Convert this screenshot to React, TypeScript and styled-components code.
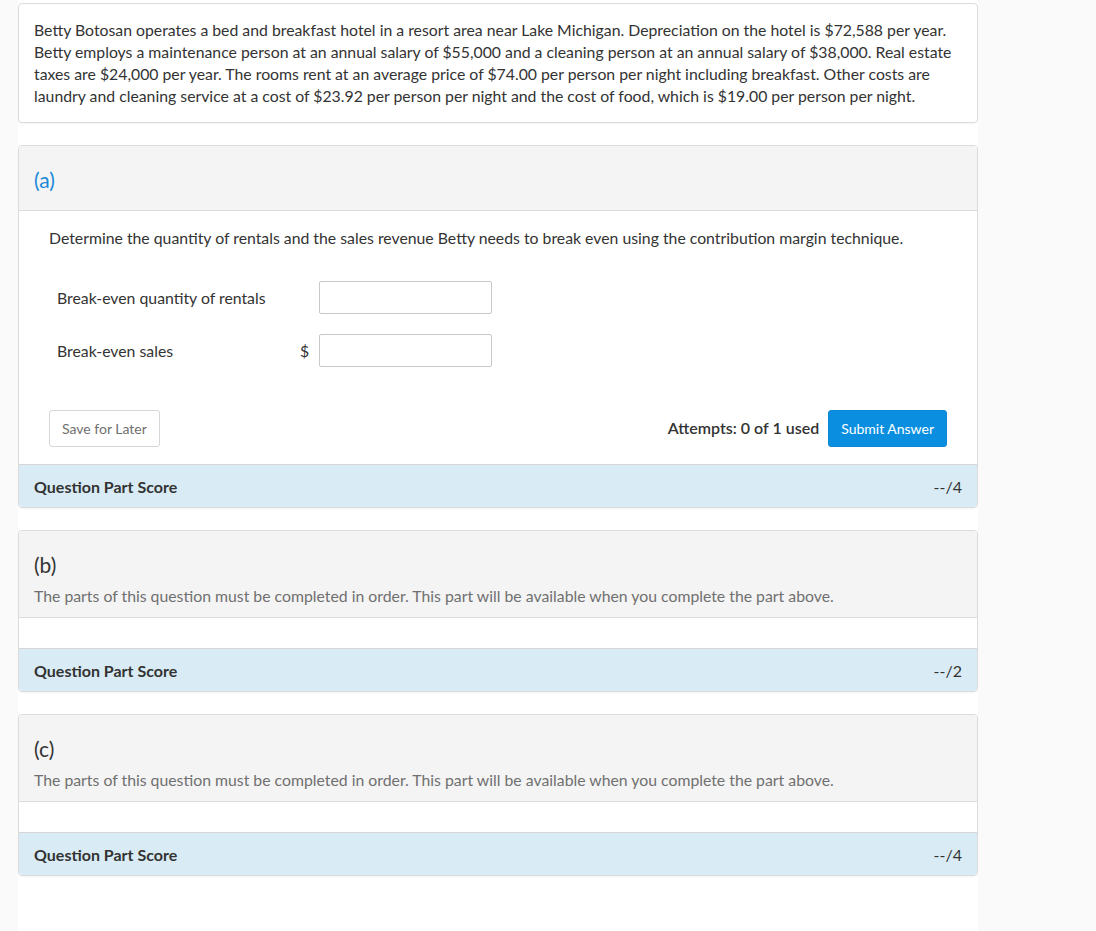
import React from "react";
import styled, { createGlobalStyle } from "styled-components";

const GlobalStyle = createGlobalStyle`
  body {
    margin: 0;
    background: #fafafa;
    font-family: Lato, "Open Sans", sans-serif;
    color: #333;
  }
`;

type Part = {
  letter: string;
  max: number;
  locked: boolean;
};

const parts: Part[] = [
  { letter: "a", max: 4, locked: false },
  { letter: "b", max: 2, locked: true },
  { letter: "c", max: 4, locked: true },
];

const App = (): JSX.Element => {
  return (
    <>
      <GlobalStyle />
      <Column>
        <Card>
          <Problem>
            Betty Botosan operates a bed and breakfast hotel in a resort area near Lake Michigan.
            Depreciation on the hotel is $72,588 per year. Betty employs a maintenance person at an
            annual salary of $55,000 and a cleaning person at an annual salary of $38,000. Real
            estate taxes are $24,000 per year. The rooms rent at an average price of $74.00 per
            person per night including breakfast. Other costs are laundry and cleaning service at a
            cost of $23.92 per person per night and the cost of food, which is $19.00 per person per
            night.
          </Problem>
        </Card>
        {parts.map((p) => (
          <Card key={p.letter}>
            <PartHeader $locked={p.locked}>
              <PartLetter $active={!p.locked}>({p.letter})</PartLetter>
              {p.locked && (
                <LockedNote>
                  The parts of this question must be completed in order. This part will be available
                  when you complete the part above.
                </LockedNote>
              )}
            </PartHeader>
            {p.locked ? (
              <EmptyBody />
            ) : (
              <PartBody>
                <Prompt>
                  Determine the quantity of rentals and the sales revenue Betty needs to break even
                  using the contribution margin technique.
                </Prompt>
                <Fields>
                  <FieldRow>
                    <FieldLabel>Break-even quantity of rentals</FieldLabel>
                    <Unit />
                    <AnswerInput type="text" />
                  </FieldRow>
                  <FieldRow>
                    <FieldLabel>Break-even sales</FieldLabel>
                    <Unit>$</Unit>
                    <AnswerInput type="text" />
                  </FieldRow>
                </Fields>
                <Actions>
                  <SaveButton>Save for Later</SaveButton>
                  <SubmitGroup>
                    <Attempts>Attempts: 0 of 1 used</Attempts>
                    <SubmitButton>Submit Answer</SubmitButton>
                  </SubmitGroup>
                </Actions>
              </PartBody>
            )}
            <ScoreBar>
              <span>Question Part Score</span>
              <ScoreValue>--/{p.max}</ScoreValue>
            </ScoreBar>
          </Card>
        ))}
      </Column>
    </>
  );
};

const Column = styled.div`
  margin-left: 18px;
  width: 960px;
  min-height: 100vh;
  background: #fff;
  padding: 3px 0 40px;
  display: flex;
  flex-direction: column;
  gap: 22px;
`;

const Card = styled.div`
  border: 1px solid #dcdcdc;
  border-radius: 4px;
  background: #fff;
  overflow: hidden;
  box-shadow: 0 1px 1px rgba(0, 0, 0, 0.04);
`;

const Problem = styled.div`
  padding: 15px 15px;
  font-size: 15.8px;
  line-height: 22px;
`;

const PartHeader = styled.div<{ $locked: boolean }>`
  background: #f4f4f4;
  border-bottom: 1px solid #dcdcdc;
  padding: ${(p) => (p.$locked ? "20px 15px 10px" : "20px 15px 16px")};
  display: flex;
  flex-direction: column;
  gap: 6px;
`;

const PartLetter = styled.div<{ $active: boolean }>`
  font-size: 21px;
  line-height: 28px;
  color: ${(p) => (p.$active ? "#1a88d8" : "#333")};
`;

const LockedNote = styled.div`
  font-size: 15.8px;
  line-height: 22px;
  color: #707070;
`;

const EmptyBody = styled.div`
  height: 30px;
`;

const PartBody = styled.div`
  padding: 16px 30px 17px;
`;

const Prompt = styled.div`
  font-size: 15.8px;
  line-height: 22px;
`;

const Fields = styled.div`
  margin-top: 32px;
  padding-left: 8px;
  display: flex;
  flex-direction: column;
  gap: 21px;
`;

const FieldRow = styled.div`
  display: flex;
  align-items: center;
  height: 32px;
`;

const FieldLabel = styled.div`
  width: 243px;
  font-size: 15.8px;
`;

const Unit = styled.div`
  width: 19px;
  font-size: 15.8px;
`;

const AnswerInput = styled.input`
  box-sizing: border-box;
  width: 173px;
  height: 33px;
  border: 1px solid #c8c8c8;
  border-radius: 2px;
  outline: none;
  font-family: inherit;
  font-size: 16px;
  padding: 0 6px;
`;

const Actions = styled.div`
  margin-top: 44px;
  display: flex;
  align-items: center;
  justify-content: space-between;
`;

const SaveButton = styled.button`
  height: 37px;
  padding: 0 12px;
  background: #fff;
  border: 1px solid #d6d6d6;
  border-radius: 3px;
  color: #707070;
  font-family: inherit;
  font-size: 14px;
  cursor: pointer;
`;

const SubmitGroup = styled.div`
  display: flex;
  align-items: center;
  gap: 9px;
`;

const Attempts = styled.div`
  font-size: 16px;
  font-weight: 600;
  margin-top: -3px;
`;

const SubmitButton = styled.button`
  height: 37px;
  padding: 0 12px;
  background: #0a8fe0;
  border: 1px solid #0a88d6;
  border-radius: 3px;
  color: #fff;
  font-family: inherit;
  font-size: 14px;
  cursor: pointer;
`;

const ScoreBar = styled.div`
  background: #d9ecf5;
  border-top: 1px solid #d6d6d6;
  height: 42px;
  padding: 0 15px;
  display: flex;
  align-items: center;
  justify-content: space-between;
  font-size: 16px;
  font-weight: 700;
`;

const ScoreValue = styled.span`
  font-weight: 400;
  font-size: 16px;
`;

export default App;
